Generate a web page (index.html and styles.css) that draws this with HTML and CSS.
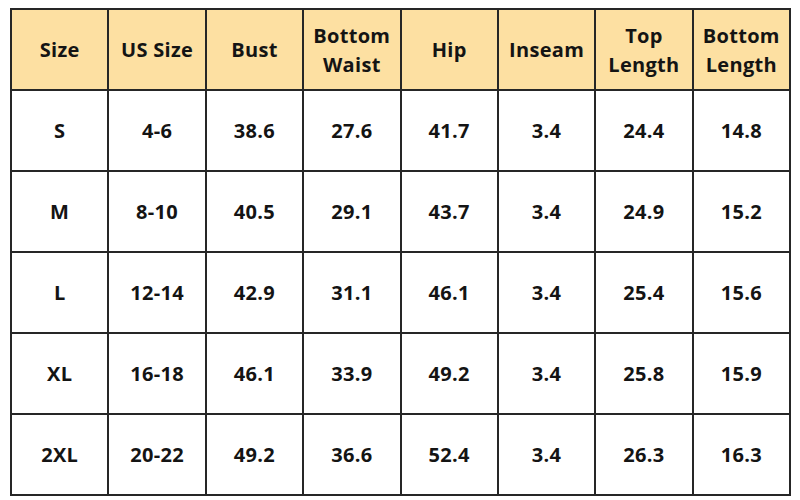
FILE: index.html
```html
<!DOCTYPE html>
<html>
<head>
<meta charset="utf-8">
<link rel="stylesheet" href="styles.css">
</head>
<body>
<table class="chart">
  <thead>
    <tr>
      <th>Size</th><th>US Size</th><th>Bust</th><th>Bottom<br>Waist</th><th>Hip</th><th>Inseam</th><th>Top<br>Length</th><th>Bottom<br>Length</th>
    </tr>
  </thead>
  <tbody>
    <tr><td>S</td><td>4-6</td><td>38.6</td><td>27.6</td><td>41.7</td><td>3.4</td><td>24.4</td><td>14.8</td></tr>
    <tr><td>M</td><td>8-10</td><td>40.5</td><td>29.1</td><td>43.7</td><td>3.4</td><td>24.9</td><td>15.2</td></tr>
    <tr><td>L</td><td>12-14</td><td>42.9</td><td>31.1</td><td>46.1</td><td>3.4</td><td>25.4</td><td>15.6</td></tr>
    <tr><td>XL</td><td>16-18</td><td>46.1</td><td>33.9</td><td>49.2</td><td>3.4</td><td>25.8</td><td>15.9</td></tr>
    <tr><td>2XL</td><td>20-22</td><td>49.2</td><td>36.6</td><td>52.4</td><td>3.4</td><td>26.3</td><td>16.3</td></tr>
  </tbody>
</table>
</body>
</html>
```
FILE: styles.css
```css
html, body {
  margin: 0;
  padding: 0;
  background: #ffffff;
}
body {
  padding: 8px 10px 0 10px;
}
.chart {
  border-collapse: collapse;
  width: 781px;
  table-layout: fixed;
  font-family: "Open Sans", "DejaVu Sans", sans-serif;
  color: #141414;
}
.chart th, .chart td {
  border: 2px solid #262626;
  text-align: center;
  vertical-align: middle;
  padding: 0;
}
.chart th {
  background: #fde0a2;
  height: 79px;
  font-size: 20px;
  font-weight: 700;
  line-height: 29px;
  letter-spacing: 0.3px;
}
.chart td {
  height: 79px;
  font-size: 20px;
  font-weight: 700;
  letter-spacing: 0.3px;
}
```
